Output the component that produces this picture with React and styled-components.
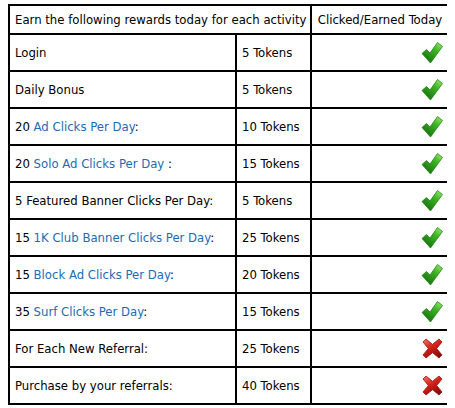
import React from "react";
import styled, { createGlobalStyle } from "styled-components";

const Global = createGlobalStyle`
  html, body { background: #fff; }
  body { margin: 4px 8px; font-family: "DejaVu Sans Condensed", "DejaVu Sans", sans-serif; font-stretch: condensed; }
`;

const Table = styled.table`
  border-collapse: collapse;
  width: 440px;
  table-layout: fixed;
  font-size: 13px;
  color: #000;
`;

const Cell = styled.td`
  border: 2px solid #000;
  padding: 0 5px;
  height: ${(p) => (p.$head ? 27 : 35)}px;
  box-sizing: content-box;
  text-align: ${(p) => p.$align || "left"};
  vertical-align: middle;
  white-space: nowrap;
  line-height: 15px;
`;

const IconCell = styled(Cell)`
  padding: 0 5px 0 0;
  text-align: right;
  & > svg { display: inline-block; vertical-align: middle; }
`;

const Link = styled.a`
  color: #1b6cb5;
  text-decoration: none;
`;

const Check = () => (
  <svg width="22" height="23" viewBox="0 0 22 23">
    <defs>
      <linearGradient id="cg" x1="1" y1="0" x2="0.2" y2="1">
        <stop offset="0" stopColor="#a6ee72" />
        <stop offset="0.4" stopColor="#3cb424" />
        <stop offset="1" stopColor="#146a0d" />
      </linearGradient>
    </defs>
    <path
      d="M1 12.5 L5.5 8.5 L9 12 L16.5 1.5 L21.5 5.5 L9.5 22 Z"
      fill="url(#cg)"
      stroke="#1f8516"
      strokeWidth="0.8"
      strokeLinejoin="round"
    />
  </svg>
);

const Cross = () => (
  <svg width="21" height="21" viewBox="0 0 21 21">
    <defs>
      <linearGradient id="xg" x1="0" y1="0" x2="0.6" y2="1">
        <stop offset="0" stopColor="#f07a6a" />
        <stop offset="0.5" stopColor="#d42219" />
        <stop offset="1" stopColor="#8a0c08" />
      </linearGradient>
    </defs>
    <path
      d="M4 1 L10.5 6.3 L17 1 L20 4 L14.7 10.5 L20 17 L17 20 L10.5 14.7 L4 20 L1 17 L6.3 10.5 L1 4 Z"
      fill="url(#xg)"
      stroke="#9a1410"
      strokeWidth="0.8"
      strokeLinejoin="round"
    />
  </svg>
);

const rows = [
  { pre: "Login", tokens: 5, ok: true },
  { pre: "Daily Bonus", tokens: 5, ok: true },
  { pre: "20 ", link: "Ad Clicks Per Day", post: ":", tokens: 10, ok: true },
  { pre: "20 ", link: "Solo Ad Clicks Per Day", post: " :", tokens: 15, ok: true },
  { pre: "5 Featured Banner Clicks Per Day:", tokens: 5, ok: true },
  { pre: "15 ", link: "1K Club Banner Clicks Per Day", post: ":", tokens: 25, ok: true },
  { pre: "15 ", link: "Block Ad Clicks Per Day", post: ":", tokens: 20, ok: true },
  { pre: "35 ", link: "Surf Clicks Per Day", post: ":", tokens: 15, ok: true },
  { pre: "For Each New Referral:", tokens: 25, ok: false },
  { pre: "Purchase by your referrals:", tokens: 40, ok: false },
];

export default function App() {
  return (
    <>
      <Global />
      <Table>
        <colgroup>
          <col style={{ width: 227 }} />
          <col style={{ width: 75 }} />
          <col style={{ width: 138 }} />
        </colgroup>
        <tbody>
          <tr>
            <Cell $head colSpan={2}>Earn the following rewards today for each activity</Cell>
            <Cell $head $align="center">Clicked/Earned Today</Cell>
          </tr>
          {rows.map((r, i) => (
            <tr key={i}>
              <Cell>
                {r.pre}
                {r.link && <Link href="#">{r.link}</Link>}
                {r.post}
              </Cell>
              <Cell>{r.tokens} Tokens</Cell>
              <IconCell>{r.ok ? <Check /> : <Cross />}</IconCell>
            </tr>
          ))}
        </tbody>
      </Table>
    </>
  );
}
